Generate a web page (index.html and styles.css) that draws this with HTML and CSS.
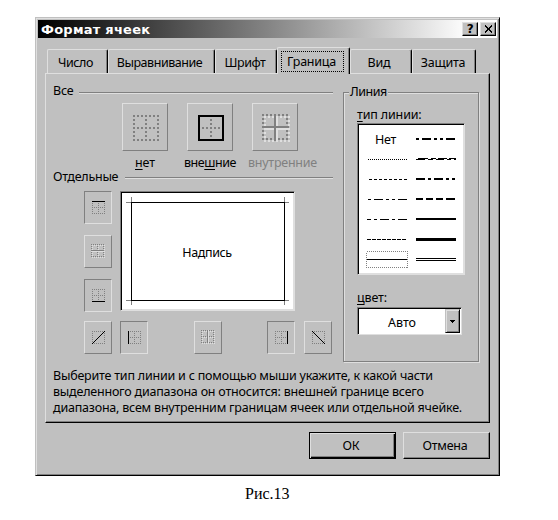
FILE: index.html
```html
<!DOCTYPE html>
<html lang="ru">
<head>
<meta charset="utf-8">
<title>Формат ячеек</title>
<link rel="stylesheet" href="styles.css">
</head>
<body>
<main class="dialog">
  <header class="titlebar">
    <h1>Формат ячеек</h1>
    <button class="winbtn">?</button>
    <button class="winbtn"><svg width="9" height="8" viewBox="0 0 9 8"><path d="M1 .5L8 7.500M8 .5L1 7.500" stroke="#000" stroke-width="1.700"/></svg></button>
  </header>
  <nav class="tabs">
    <span class="tab t1"><span>Число</span></span><span class="tab t2"><span>Выравнивание</span></span><span class="tab t3"><span>Шрифт</span></span><span class="tab t4 active"><span>Граница</span></span><span class="tab t5"><span>Вид</span></span><span class="tab t6"><span>Защита</span></span>
  </nav>
  <section class="panel">
    <div class="columns">
      <div class="borders">
        <div class="section all"><span>Все</span><i></i></div>
        <div class="presets">
          <div class="preset"><button class="big"><svg width="26" height="26"><path d="M0 1H26M0 13H26M0 25H26M1 0V26M13 0V26M25 0V26" stroke="#808080" stroke-width="2" stroke-dasharray="2 2"/></svg></button><span class="cap c1"><u>н</u>ет</span></div>
          <div class="preset"><button class="big"><svg width="26" height="26"><path d="M4 13H24M13 4V24" stroke="#808080" stroke-width="2" stroke-dasharray="2 2"/><rect x="1" y="1" width="24" height="24" fill="none" stroke="#000" stroke-width="2"/></svg></button><span class="cap c2">вне<u>ш</u>ние</span></div>
          <div class="preset"><button class="big"><svg width="28" height="28"><path d="M2 3H28M2 27H28M3 2V28M27 2V28" stroke="#dfdfdf" stroke-width="2" stroke-dasharray="2 2"/><path d="M2 15H28M15 2V28" stroke="#dfdfdf" stroke-width="2"/><path d="M0 1H28M0 25H28M1 0V28M25 0V28" stroke="#808080" stroke-width="2" stroke-dasharray="2 2"/><path d="M0 13H27M13 0V27" stroke="#808080" stroke-width="2"/></svg></button><span class="cap c3">внутренние</span></div>
        </div>
        <div class="section single"><span>Отдельные</span><i></i></div>
        <div class="editor">
          <div class="sides">
            <button class="small on"><svg width="14" height="14"><path class="dots" d="M0 6.500H13M0 12.500H13M.5 0V13M6.500 0V13M12.500 0V13"/><path class="ink" d="M0 .5H13"/></svg></button>
            <button class="small off"><svg width="14" height="14"><path class="glow" d="M1 1.500H14M1 13.500H14M1.500 1V14M7.500 1V14M13.500 1V14"/><path class="dots" d="M0 .5H13M0 12.500H13M.5 0V13M6.500 0V13M12.500 0V13"/><path class="gray" d="M0 6.500H13"/><path class="white" d="M0 7.500H14"/></svg></button>
            <button class="small on"><svg width="14" height="14"><path class="dots" d="M0 .5H13M0 6.500H13M.5 0V13M6.500 0V13M12.500 0V13"/><path class="ink" d="M0 12.500H13"/></svg></button>
          </div>
          <div class="preview">
            <svg width="171" height="116"><path d="M4 9.500H167M4 107.500H167M9.500 4V112M162.500 4V112" stroke="#808080"/><rect x="9.500" y="9.500" width="153" height="98" fill="#fff" stroke="#000"/></svg>
            <span>Надпись</span>
          </div>
        </div>
        <div class="bottoms">
          <button class="small"><svg width="14" height="14"><path class="dots" d="M0 .5H13M0 12.500H13M.5 0V13M12.500 0V13"/><path class="ink" d="M0 13L13 0"/></svg></button>
          <button class="small on"><svg width="14" height="14"><path class="dots" d="M0 .5H13M0 6.500H13M0 12.500H13M6.500 0V13M12.500 0V13"/><path class="ink" d="M.5 0V13"/></svg></button>
          <button class="small off mid"><svg width="14" height="14"><path class="glow" d="M1 1.500H14M1 7.500H14M1 13.500H14M1.500 1V14M13.500 1V14"/><path class="dots" d="M0 .5H13M0 6.500H13M0 12.500H13M.5 0V13M12.500 0V13"/><path class="gray" d="M6.500 0V13"/><path class="white" d="M7.500 0V14"/></svg></button>
          <button class="small on right"><svg width="14" height="14"><path class="dots" d="M0 .5H13M0 6.500H13M0 12.500H13M.5 0V13M6.500 0V13"/><path class="ink" d="M12.500 0V13"/></svg></button>
          <button class="small diag"><svg width="14" height="14"><path class="dots" d="M0 .5H13M0 12.500H13M.5 0V13M12.500 0V13"/><path class="ink" d="M0 0L13 13"/></svg></button>
        </div>
      </div>
      <fieldset class="line">
        <legend>Линия</legend>
        <label class="lt"><u>т</u>ип линии:</label>
        <div class="list">
          <span class="none">Нет</span>
          <svg width="40" height="5"><path d="M0 2H3M6 2H15M18 2H21M24 2H27M30 2H39" stroke-width="2"/></svg>
          <svg width="41" height="5"><path d="M1 2.500H41" stroke-dasharray="1 1"/></svg>
          <svg width="40" height="5"><path d="M0 2.500H9M12 2.500H17M20 2.500H28M31 2.500H35M38 2.500H40M2 1.500H12M15 1.500H20M22 1.500H31M33 1.500H40"/></svg>
          <svg width="41" height="5"><path d="M2 2.500H41" stroke-dasharray="3 2"/></svg>
          <svg width="40" height="5"><path d="M0 2H9M12 2H15M18 2H27M30 2H33M36 2H39" stroke-width="2"/></svg>
          <svg width="41" height="5"><path d="M1 2.500H4M7 2.500H16M19 2.500H22M25 2.500H28M31 2.500H40"/></svg>
          <svg width="40" height="5"><path d="M0 2H7M10 2H17M20 2H27M30 2H39" stroke-width="2"/></svg>
          <svg width="41" height="5"><path d="M0 2.500H4M7 2.500H10M13 2.500H22M25 2.500H28M31 2.500H40"/></svg>
          <svg width="40" height="5"><path d="M0 2H40" stroke-width="2"/></svg>
          <svg width="41" height="5"><path d="M0 2.500H40" stroke-dasharray="4 1"/></svg>
          <svg width="40" height="5"><path d="M0 2.500H40" stroke-width="3"/></svg>
          <svg class="chosen" width="42" height="17"><rect x=".5" y=".5" width="41" height="16" fill="none" stroke="#808080" stroke-dasharray="1 1"/><path d="M1 8.500H41"/></svg>
          <svg width="40" height="5"><path d="M0 1.500H40M0 3.500H40"/></svg>
        </div>
        <label class="lc"><u>ц</u>вет:</label>
        <div class="combo"><span>Авто</span><button class="drop"><svg width="5" height="3"><path d="M0 0H5L2.500 3Z"/></svg></button></div>
      </fieldset>
    </div>
    <p class="help"><span>Выберите тип линии и с помощью мыши укажите, к какой части</span><span>выделенного диапазона он относится: внешней границе всего</span><span>диапазона, всем внутренним границам ячеек или отдельной ячейке.</span></p>
  </section>
  <footer class="actions"><button class="push default">ОК</button><button class="push">Отмена</button></footer>
</main>
<p class="figure">Рис.13</p>
</body>
</html>
```
FILE: styles.css
```css
* { box-sizing: border-box; }
body {
  margin: 0;
  padding: 17px 0 0 35px;
  background: #fff;
  color: #000;
  font: 12.5px/16px "Noto Sans", "Open Sans", sans-serif;
  letter-spacing: -.25px;
  white-space: nowrap;
}
svg { display: block; shape-rendering: crispEdges; flex: none; }
button { margin: 0; padding: 0; font: inherit; letter-spacing: inherit; color: inherit; background: #c0c0c0; border-radius: 0; }
.dialog {
  width: 465px; height: 459px;
  padding: 1px;
  background: #c0c0c0;
  border: 1px solid;
  border-color: #c0c0c0 #000 #000 #c0c0c0;
  box-shadow: inset 1px 1px #dfdfdf, inset -1px -1px #808080;
}
.titlebar {
  display: flex; align-items: center; gap: 2px;
  height: 18px; margin: 1px 1px 0;
  padding: 0 1px 0 3px;
  background: linear-gradient(90deg, #000, #848484 50%, #fff 94%);
}
.titlebar h1 { flex: 1; margin: 0; padding-top: 1px; color: #fff; font: bold 13px/18px "DejaVu Sans", sans-serif; letter-spacing: .25px; }
.winbtn {
  display: flex; align-items: center; justify-content: center;
  width: 16px; height: 14px;
  border: 1px solid; border-color: #dfdfdf #000 #000 #dfdfdf;
  box-shadow: inset -1px -1px #808080;
  font: bold 12px/12px "DejaVu Sans", sans-serif;
}
.tabs { display: flex; align-items: flex-end; height: 26px; margin: 9px 0 0 10px; letter-spacing: -.45px; }
.tab {
  height: 24px;
  border: solid; border-width: 1px 1px 0; border-color: #dfdfdf #000 #dfdfdf #dfdfdf;
  border-radius: 2px 2px 0 0;
  box-shadow: inset -1px 0 #808080;
  text-align: center; line-height: 26px;
}
.t1 { width: 61px; padding-right: 4px; } .t2 { width: 107px; padding-right: 4px; } .t3 { width: 62px; padding-right: 2px; }
.t4 { width: 73px; letter-spacing: -.25px; } .t5 { width: 62px; padding-right: 4px; letter-spacing: -.1px; } .t6 { width: 64px; padding-right: 2px; letter-spacing: -.2px; }
.tab.active { height: 27px; margin-bottom: -1px; background: #c0c0c0; padding: 3px 5px 0 3px; line-height: 20px; }
.active span { display: block; height: 21px; padding-right: 2px; border: 1px dotted #000; }
.panel {
  width: 445px; height: 350px; margin-left: 8px;
  border: 1px solid; border-color: #dfdfdf #000 #000 #dfdfdf;
  box-shadow: inset -1px -1px #808080;
}
.columns { display: flex; height: 293px; }
.borders { width: 297px; padding: 9px 0 0 7px; }
.section { display: flex; align-items: center; height: 16px; width: 280px; }
.section span { width: 19px; line-height: 18px; }
.section i { flex: 1; height: 2px; margin: 4px 0 0 7px; background: linear-gradient(#808080 50%, #dfdfdf 50%); }
.single span { width: 65px; padding-top: 1px; }
.presets { display: flex; gap: 19px; padding: 4px 0 0 69px; }
.preset { display: flex; flex-direction: column; align-items: center; width: 46px; height: 65px; }
.big {
  display: flex; flex: none; width: 46px; height: 48px; padding: 11px 0 0 10px;
  border: 1px solid; border-color: #dfdfdf #808080 #808080 #dfdfdf;
}
.preset:nth-child(3) .big { padding: 10px 0 0 9px; }
.cap { margin-top: 4px; letter-spacing: -.45px; }
.c1 { letter-spacing: -.1px; }
.c3 { color: #808080; align-self: flex-start; margin-left: -4px; letter-spacing: -.25px; }
u { text-decoration: underline; text-underline-offset: 2px; text-decoration-thickness: 1px; text-decoration-skip-ink: none; }
.editor { display: flex; gap: 8px; padding: 7px 0 0 31px; }
.sides { display: flex; flex-direction: column; gap: 11px; }
.small {
  display: flex; align-items: flex-start;
  width: 28px; height: 33px; padding: 9px 0 0 7px;
  border: 1px solid; border-color: #dfdfdf #808080 #808080 #dfdfdf;
}
.small.on { border-color: #808080 #dfdfdf #dfdfdf #808080; }
.small.off { padding: 8px 0 0 6px; }
.dots, .glow { stroke: #808080; stroke-dasharray: 1 1; }
.glow, .white { stroke: #dfdfdf; }
.gray { stroke: #808080; }
.ink { stroke: #000; }
.preview {
  display: grid; place-items: center; width: 175px; height: 120px;
  background: #fff;
  border: 1px solid; border-color: #808080 #dfdfdf #dfdfdf #808080;
  box-shadow: inset 1px 1px #000, inset -1px -1px #dfdfdf;
}
.preview > * { grid-area: 1 / 1; }
.preview span { padding: 4px 1px 0 0; letter-spacing: -.4px; }
.bottoms { display: flex; padding: 9px 0 0 31px; }
.bottoms .on { margin-left: 8px; }
.bottoms .mid { margin-left: 46px; }
.bottoms .right { margin-left: 45px; }
.bottoms .diag { margin-left: 9px; }
.line {
  width: 136px; height: 278px; margin: 10px 0 0; padding: 6px 0 0 13px;
  border: 1px solid #808080;
  box-shadow: 1px 1px #dfdfdf, inset 1px 1px #dfdfdf;
}
.line legend { padding: 0 1px; margin-left: -8px; background: #c0c0c0; letter-spacing: -.5px; }
.line label { display: block; height: 16px; line-height: 18px; letter-spacing: -.15px; }
.list {
  display: grid; grid-template: repeat(7, 20px) / 49px 49px; align-items: center;
  width: 108px; height: 152px; margin-top: 1px; padding: 5px 0 0 9px;
  background: #fff;
  border: 1px solid; border-color: #808080 #dfdfdf #dfdfdf #808080;
  box-shadow: inset 1px 1px #000, inset -1px -1px #dfdfdf;
}
.list path { stroke: #000; }
.none { padding: 2px 0 0 8px; }
.chosen { margin-left: -1px; }
.line .lc { margin-top: 14px; }
.combo {
  display: flex; width: 105px; height: 28px; margin-top: 2px; padding: 1px;
  background: #fff;
  border: 1px solid; border-color: #808080 #dfdfdf #dfdfdf #808080;
  box-shadow: inset 1px 1px #000;
}
.combo span { flex: 1; text-align: center; line-height: 27px; letter-spacing: 0; }
.drop {
  display: flex; align-items: center; justify-content: center; width: 15px;
  border: 1px solid; border-color: #c0c0c0 #000 #000 #c0c0c0;
  box-shadow: inset 1px 1px #dfdfdf, inset -1px -1px #808080;
}
.help { margin: 1px 0 0 7px; letter-spacing: -.21px; }
.help span { display: block; }
.actions { display: flex; justify-content: flex-end; gap: 7px; margin: 9px 8px 0 0; }
.push {
  width: 87px; height: 27px; padding-right: 3px;
  border: 1px solid; border-color: #dfdfdf #000 #000 #dfdfdf;
  box-shadow: inset -1px -1px #808080;
}
.push.default { border-color: #000; box-shadow: inset 1px 1px #dfdfdf, inset -1px -1px #000, inset -2px -2px #808080; }
.figure { margin: 8px 0 0 210px; font: 16px/20px "Liberation Serif", serif; letter-spacing: 0; }
```
